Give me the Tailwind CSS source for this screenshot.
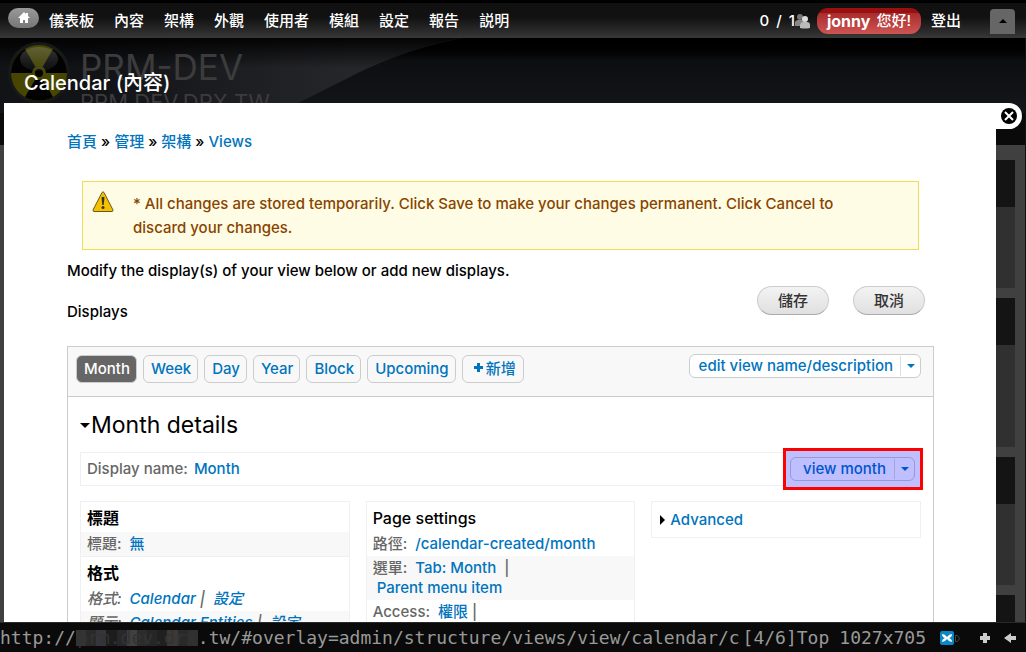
<!DOCTYPE html>
<html lang="zh-Hant">
<head>
    <meta charset="UTF-8">
    <meta name="viewport" content="width=device-width, initial-scale=1.0">
    <title>Calendar (內容)</title>
    <script src="https://cdn.jsdelivr.net/npm/@tailwindcss/browser@4"></script>
</head>
<body class="h-screen flex flex-col overflow-hidden bg-black text-[15px] leading-6 font-medium font-['Inter','Noto_Sans_CJK_TC',sans-serif]">
    <!-- Admin toolbar -->
    <nav class="h-[38px] shrink-0 flex items-center pl-2 pr-[11px] pt-[1px] border-t-3 border-black bg-linear-to-b from-[#111] from-40% to-[#383838] text-white whitespace-nowrap">
        <a href="#" aria-label="Home" class="w-[31px] h-5 mb-[6px] rounded-full bg-linear-to-b from-[#999] to-[#777] flex items-center justify-center">
            <svg class="w-3 h-3" viewBox="0 0 12 12" fill="#fff"><path d="M6 0 0 6h2v5h3V8h2v3h3V6h2L10 4V1H8v1z"/></svg>
        </a>
        <div class="flex gap-5 ml-[10px]">
            <a href="#">儀表板</a>
            <a href="#">內容</a>
            <a href="#">架構</a>
            <a href="#">外觀</a>
            <a href="#">使用者</a>
            <a href="#">模組</a>
            <a href="#">設定</a>
            <a href="#">報告</a>
            <a href="#">説明</a>
        </div>
        <div class="flex items-center ml-auto">
            <span class="flex gap-[7px]"><span>0</span><span>/</span><span>1</span></span>
            <svg class="w-4 h-4" viewBox="0 0 16 16">
                <circle cx="5" cy="4" r="3" fill="#777"/><path d="M0 13V9q1-2 3-2h4q2 0 2 3v3z" fill="#888"/>
                <circle cx="10" cy="6" r="3" fill="#ddd"/><path d="M5 15v-3q1-3 3-3h4q3 0 3 3v3q-5 1-10 0z" fill="#bbb"/>
            </svg>
            <a href="#" class="ml-[6px] h-[26px] px-[10px] rounded-[11px] flex items-center gap-[6px] bg-linear-to-b from-[#9a1010] from-20% via-[#a82c2c] via-20% to-[#cf5454]"><b class="text-base font-bold">jonny</b><span>您好!</span></a>
            <a href="#" class="ml-[10px]">登出</a>
            <button aria-label="Hide shortcuts" class="ml-[29px] w-[25px] h-[25px] rounded-t bg-[#666] flex items-center justify-center">
                <svg class="w-2 h-1" viewBox="0 0 8 4"><path d="M4 0l4 4H0z"/></svg>
            </button>
        </div>
    </nav>

    <main class="relative flex-1 min-h-0 overflow-hidden">
        <!-- Dimmed site behind the overlay -->
        <div class="absolute inset-0 flex flex-col bg-[#404040] border-r border-[#111]">
            <div class="relative h-[75px] shrink-0 overflow-hidden bg-linear-to-b from-black via-[#0d0e10] via-30% to-[#15161a]">
                <svg class="absolute left-0 top-0 w-[462px] h-[75px]" viewBox="0 0 462 75">
                    <defs><linearGradient id="sheen" x1="0" y1="0" x2="1" y2="0"><stop offset="0.2" stop-color="#121317"/><stop offset="0.75" stop-color="#252629"/></linearGradient>
                    <linearGradient id="shade" x1="0" y1="0" x2="0" y2="1"><stop offset="0" stop-color="#000" stop-opacity="0.9"/><stop offset="0.4" stop-color="#000" stop-opacity="0"/></linearGradient></defs>
                    <path d="M0 0H462Q400 12 342 43L278 75H0z" fill="url(#sheen)"/>
                    <path d="M0 0H462Q400 12 342 43L278 75H0z" fill="url(#shade)"/>
                </svg>
                <div class="relative flex pl-2 pt-1 text-[#3c3c3c]">
                    <svg class="w-[62px] h-[62px] shrink-0" viewBox="0 0 62 62">
                        <defs><linearGradient id="gloss" x1="0" y1="0" x2="0" y2="1"><stop offset="0" stop-color="#888" stop-opacity="0.4"/><stop offset="1" stop-color="#555" stop-opacity="0.15"/></linearGradient></defs>
                        <circle cx="31" cy="31" r="31" fill="#17181a"/>
                        <circle cx="31" cy="31" r="28" fill="#474600"/>
                        <path d="M31 31H3A28 28 0 0 1 17 7zM31 31L45 7A28 28 0 0 1 59 31zM31 31L45 55A28 28 0 0 1 17 55z" fill="#020202"/>
                        <circle cx="31" cy="31" r="7" fill="#474600"/><circle cx="31" cy="31" r="4" fill="#020202"/>
                        <ellipse cx="31" cy="17" rx="19" ry="12" fill="url(#gloss)"/>
                    </svg>
                    <div class="ml-[10px] whitespace-nowrap font-normal">
                        <div class="text-[35px] leading-[50px]">PRM-DEV</div>
                        <div class="text-[22px] leading-5">PRM DEV.DRX TW</div>
                    </div>
                </div>
            </div>
            <div class="h-8 shrink-0 bg-[#0a0a0a]"></div>
            <div class="w-[90px] ml-auto mr-[10px] mt-[15px] flex flex-col gap-[10px]">
                <div class="h-32 bg-[#303030] border-t-47 border-[#141414]"></div>
                <div class="h-[149px] bg-[#303030] border-t-47 border-[#141414]"></div>
                <div class="h-32 bg-[#303030] border-t-47 border-[#141414]"></div>
                <div class="h-32 bg-[#303030] border-t-47 border-[#141414]"></div>
            </div>
        </div>

        <!-- Overlay -->
        <div class="relative h-full flex flex-col pl-1 pr-[30px]">
            <h1 class="h-[65px] shrink-0 pt-[30px] pl-5 text-white text-xl leading-[30px] font-medium">Calendar (內容)</h1>
            <button aria-label="Close" class="absolute right-1 top-[65px] w-[26px] h-[26px] bg-white rounded-r-full flex items-center justify-center">
                <svg class="w-4 h-4" viewBox="0 0 16 16"><circle cx="8" cy="8" r="8"/><path d="M4 4l8 8m0-8l-8 8" stroke="#fff" stroke-width="2"/></svg>
            </button>
            <div class="flex-1 bg-white pl-[63px] pr-[62px] pt-[27px]">
                <div class="flex gap-1">
                    <a href="#" class="text-[#0074bd]">首頁</a> <span>»</span>
                    <a href="#" class="text-[#0074bd]">管理</a> <span>»</span>
                    <a href="#" class="text-[#0074bd]">架構</a> <span>»</span>
                    <a href="#" class="text-[#0074bd]">Views</a>
                </div>

                <div class="mx-[15px] mt-[27px] flex border border-[#ed5] bg-[#fffce5] text-[#840] pt-[10px] pb-[9px] pl-2 pr-12">
                    <svg class="w-6 h-6 shrink-0 mr-[18px] -mt-[2px]" viewBox="0 0 24 24">
                        <path d="M11 2.500Q12 1 13 2.500L22 20q0 1.500-1 1.500H3q-1 0-1-1.500z" fill="#f5c000" stroke="#665a20"/>
                        <path d="M10.500 7.500q1.500-1.500 3 0L12.700 15h-1.400z" fill="#333"/><circle cx="12" cy="17.500" r="1.500" fill="#333"/>
                    </svg>
                    <p>* All changes are stored temporarily. Click Save to make your changes permanent. Click Cancel to discard your changes.</p>
                </div>
                <p class="mt-[9px]">Modify the display(s) of your view below or add new displays.</p>

                <div class="flex justify-between mt-[3px] pr-[9px]">
                    <h2 class="mt-[14px]">Displays</h2>
                    <div class="flex gap-6">
                        <button class="w-[72px] h-[29px] rounded-full border border-[#ccc] border-b-[#aaa] bg-linear-to-b from-[#f3f3f3] to-[#e0e0e0] text-[#333]">儲存</button>
                        <button class="w-[72px] h-[29px] rounded-full border border-[#ccc] border-b-[#aaa] bg-linear-to-b from-[#f3f3f3] to-[#e0e0e0] text-[#333]">取消</button>
                    </div>
                </div>

                <section class="mt-[22px] border border-[#ccc]">
                    <div class="h-[50px] flex items-start gap-[6px] pt-2 pl-2 pr-3 bg-[#f8f8f8] border-b border-[#ccc] text-[#0074bd] whitespace-nowrap">
                        <a href="#" class="h-7 pl-[7px] pr-[6px] pt-[1px] border border-[#ccc] rounded-md bg-[#666] text-white">Month</a>
                        <a href="#" class="h-7 pl-[7px] pr-[6px] pt-[1px] border border-[#ccc] rounded-md">Week</a>
                        <a href="#" class="h-7 pl-[7px] pr-[6px] pt-[1px] border border-[#ccc] rounded-md">Day</a>
                        <a href="#" class="h-7 pl-[7px] pr-[6px] pt-[1px] border border-[#ccc] rounded-md">Year</a>
                        <a href="#" class="h-7 pl-[7px] pr-[6px] pt-[1px] border border-[#ccc] rounded-md">Block</a>
                        <a href="#" class="h-7 pl-[7px] pr-[6px] pt-[1px] border border-[#ccc] rounded-md">Upcoming</a>
                        <button class="h-7 pl-[11px] pr-[7px] border border-[#ccc] rounded-md flex items-center gap-[3px]">
                            <svg class="w-[9px] h-[9px] mb-1" viewBox="0 0 9 9" fill="currentColor"><path d="M3 0h3v3h3v3H6v3H3V6H0V3h3z"/></svg>新增
                        </button>
                        <div class="h-6 ml-auto -mt-[1px] flex items-center border border-[#ccc] rounded-md bg-white leading-[22px]">
                            <button class="pl-[9px] pr-[7px]">edit view name/description</button>
                            <button aria-label="More view actions" class="w-5 h-5 border-l border-[#ddd] flex items-center justify-center"><svg class="w-2 h-1" viewBox="0 0 8 4" fill="currentColor"><path d="M0 0h8L4 4z"/></svg></button>
                        </div>
                    </div>

                    <div class="px-3 pt-[13px]">
                        <h2 class="flex items-center gap-[1px] text-[23px] leading-[30px] font-normal">
                            <svg class="w-[10px] h-[5px]" viewBox="0 0 10 5"><path d="M0 0h10L5 5z"/></svg>Month details
                        </h2>
                        <div class="relative h-[34px] mt-3 px-[6px] flex items-center border border-[#f0f0f0] text-[#666]">
                            Display name: <a href="#" class="ml-[6px] text-[#0074bd]">Month</a>
                            <!-- highlighted action -->
                            <div class="absolute -right-[3px] -top-[5px] w-[140px] h-[42px] p-1 border-3 border-[#f00] bg-[#bfbfff] text-[#0055cc]">
                                <div class="w-[125px] h-6 mt-[2px] flex items-center border border-[#9999d5] rounded-md leading-[22px]">
                                    <button class="flex-1 pl-1 whitespace-nowrap">view month</button>
                                    <button aria-label="More display actions" class="w-5 h-5 border-l border-[#a6a6dd] flex items-center justify-center"><svg class="w-2 h-1" viewBox="0 0 8 4" fill="currentColor"><path d="M0 0h8L4 4z"/></svg></button>
                                </div>
                            </div>
                        </div>

                        <div class="mt-[15px] grid grid-cols-3 gap-4 items-start text-[#666]">
                            <div class="border border-[#f0f0f0]">
                                <h3 class="h-[30px] px-[6px] pt-1 text-black text-base leading-6 font-bold">標題</h3>
                                <div class="h-6 px-[6px] bg-[#f8f8f8]">標題: <a href="#" class="ml-1 text-[#0074bd]">無</a></div>
                                <h3 class="h-[31px] px-[6px] pt-1 border-t border-[#f0f0f0] text-black text-base leading-6 font-bold">格式</h3>
                                <div class="h-6 px-[6px] italic">格式: <a href="#" class="ml-1 text-[#0074bd]">Calendar</a> <span>|</span> <a href="#" class="ml-1 text-[#0074bd]">設定</a></div>
                                <div class="h-6 px-[6px] bg-[#f8f8f8] italic">顯示: <a href="#" class="ml-1 text-[#0074bd]">Calendar Entities</a> <span>|</span> <a href="#" class="ml-1 text-[#0074bd]">設定</a></div>
                            </div>
                            <div class="border border-[#f0f0f0]">
                                <h3 class="h-[30px] px-[6px] pt-1 text-black text-base leading-6">Page settings</h3>
                                <div class="h-6 px-[6px]">路徑: <a href="#" class="ml-1 text-[#0074bd]">/calendar-created/month</a></div>
                                <div class="h-11 px-[6px] pt-[2px] leading-5 bg-[#f8f8f8]">選單: <a href="#" class="ml-1 text-[#0074bd]">Tab: Month</a> <span class="ml-1">|</span><br><a href="#" class="ml-1 text-[#0074bd]">Parent menu item</a></div>
                                <div class="h-6 px-[6px]">Access: <a href="#" class="ml-1 text-[#0074bd]">權限</a> <span>|</span></div>
                            </div>
                            <div class="h-[37px] px-2 flex items-center gap-[5px] border border-[#f0f0f0]">
                                <svg class="w-[5px] h-[10px]" viewBox="0 0 5 10" fill="#000"><path d="M0 0l5 5-5 5z"/></svg>
                                <a href="#" class="text-[#0074bd]">Advanced</a>
                            </div>
                        </div>
                    </div>
                </section>
            </div>
        </div>
    </main>

    <!-- Browser status line -->
    <footer class="h-[30px] shrink-0 flex items-center border-t border-[#2a2a2a] bg-[#0a0a0a] text-[#999] text-lg leading-[28px] font-normal whitespace-nowrap font-['DejaVu_Sans_Mono',monospace]">
        <span>http://</span>
        <span class="relative h-4 w-[122px] leading-4 text-center text-[#333] bg-[#232323]">
            <span class="absolute inset-0 flex">
                <span class="flex-1 bg-[#333]"></span><span class="flex-1 bg-[#2a2a2a]"></span><span class="flex-1 bg-[#34363a]"></span><span class="flex-1 bg-[#1d1d1c]"></span><span class="flex-1 bg-[#26282c]"></span><span class="flex-1 bg-[#404040]"></span><span class="flex-1 bg-[#2c2c2c]"></span><span class="flex-1 bg-[#242628]"></span><span class="flex-1 bg-[#202020]"></span><span class="flex-1 bg-[#3c3836]"></span><span class="flex-1 bg-[#2a2a2a]"></span><span class="flex-1 bg-[#303030]"></span>
            </span>
            <span class="relative">prm.dev.drx</span>
        </span>
        <span class="flex-1 min-w-0 overflow-hidden">.tw/#overlay=admin/structure/views/view/calendar/c</span>
        <span>[4/6]Top</span>
        <span class="ml-[10px]">1027x705</span>
        <svg class="ml-[14px] w-5 h-[14px]" viewBox="0 0 20 14">
            <rect width="14" height="14" rx="2" fill="#0a87c8"/>
            <path d="M2 3q3 0 5 3 2-3 5-3 0 3-3 4 3 1 3 4-3 0-5-3-2 3-5 3 0-3 3-4-3-1-3-4z" fill="#fff"/>
            <path d="M15.500 4.500h2l2 3-2 3h-2z" fill="none" stroke="#444"/>
        </svg>
        <svg class="ml-5 w-[10px] h-[10px]" viewBox="0 0 10 10" fill="#ccc"><path d="M3 0h4v3h3v4H7v3H3V7H0V3h3z"/></svg>
        <svg class="ml-[14px] mr-[10px] w-3 h-[10px]" viewBox="0 0 12 10" fill="#ccc"><path d="M0 5l7-5v3h5v4H7v3z"/></svg>
    </footer>
</body>
</html>
